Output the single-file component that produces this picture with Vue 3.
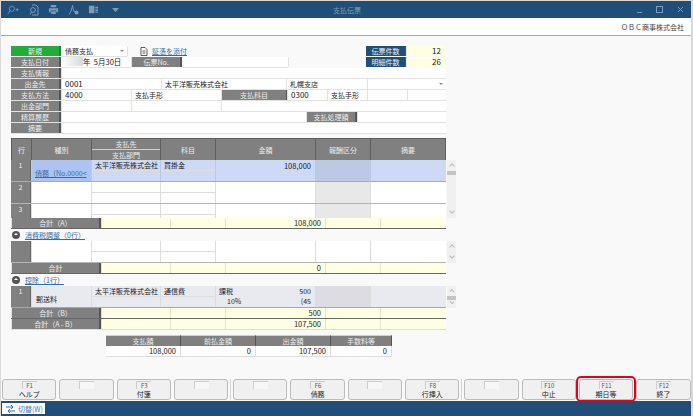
<template>
  <div class="window">
    <header class="titlebar">
      <div class="tools">
        <svg width="13" height="10" viewBox="0 0 16 12"><circle cx="6" cy="4.500" r="3.200" /><path d="M3.600 7 L1 11 M10.500 5.500h4M12.500 3.500v4" /></svg>
        <svg width="10" height="12" viewBox="0 0 10 12"><path d="M3 1h4l2 2v8H3" /><circle cx="4" cy="6" r="2.400" /><path d="M2.400 8 L1 10.500" /></svg>
        <svg width="11" height="11" viewBox="0 0 12 12"><path class="solid" d="M3 1h6v2.500H3zM1 4.500h10v4.500H9V7H3v2H1zM3.500 8h5v3h-5z" /></svg>
        <svg width="11" height="12" viewBox="0 0 11 12"><path d="M1 10.500C3 8 4 4 4.500 1.500C5 4 5.500 7 6.500 8" /><circle class="solid" cx="8.500" cy="8.500" r="2" /></svg>
        <svg width="11" height="11" viewBox="0 0 12 12"><path class="solid" d="M1 2h6v8H1zM8 3h3v2H8zM8 6h3v2H8z" /><path d="M8 9h3" /></svg>
        <svg class="drop" width="7" height="5" viewBox="0 0 7 5"><path class="solid" d="M0 1h7L3.500 5z" /></svg>
      </div>
      <span class="title">支払伝票</span>
      <div class="winbtns">
        <span class="minimize"></span>
        <span class="maximize"></span>
        <svg width="7" height="7" viewBox="0 0 7 7"><path d="M1 1l5 5M6 1L1 6" /></svg>
      </div>
    </header>

    <div class="companybar">ＯＢＣ商事株式会社</div>

    <main class="content">
      <section class="form">
        <div class="form-row first">
          <span class="label green">新規</span>
          <span class="cell combo w-65">債務支払<i class="caret"></i></span>
          <span class="attach">
            <svg width="8" height="9" viewBox="0 0 8 9"><path d="M1 .5h4l2 2v6H1zM2.500 4h3M2.500 6h3" /></svg>
            <a>証憑を添付</a>
          </span>
          <span class="counter">
            <span class="label navy">伝票件数</span><span class="count">12</span>
          </span>
        </div>
        <div class="form-row second">
          <span class="label">支払日付</span>
          <span class="cell date"><i class="masked"></i>年&nbsp;&nbsp;5月30日</span>
          <span class="label">伝票No.</span>
          <span class="cell w-105"></span>
          <span class="counter">
            <span class="label navy">明細件数</span><span class="count">26</span>
          </span>
        </div>
        <div class="form-row">
          <span class="label">支払情報</span>
          <span class="cell grow"></span>
        </div>
        <div class="form-row">
          <span class="label">出金先</span>
          <span class="cell num w-99">0001</span>
          <span class="cell w-125">太平洋販売株式会社</span>
          <span class="cell w-80">札幌支店</span>
          <span class="cell combo grow"><i class="caret"></i></span>
        </div>
        <div class="form-row">
          <span class="label">支払方法</span>
          <span class="cell num w-69">4000</span>
          <span class="cell w-90">支払手形</span>
          <span class="label w-65">支払科目</span>
          <span class="cell num w-40">0300</span>
          <span class="cell w-40">支払手形</span>
          <span class="cell w-40"></span>
          <span class="cell grow"></span>
        </div>
        <div class="form-row">
          <span class="label">出金部門</span>
          <span class="cell w-69"></span>
          <span class="cell w-90"></span>
          <span class="cell grow"></span>
        </div>
        <div class="form-row">
          <span class="label">精算履歴</span>
          <span class="cell w-245"></span>
          <span class="label">支払処理額</span>
          <span class="cell grow"></span>
        </div>
        <div class="form-row">
          <span class="label">摘要</span>
          <span class="cell grow"></span>
        </div>
      </section>

      <section class="grid-wrap">
        <div class="grid head">
          <div class="hd">行</div>
          <div class="hd">種別</div>
          <div class="hd split"><span>支払先</span><span>支払部門</span></div>
          <div class="hd">科目</div>
          <div class="hd">金額</div>
          <div class="hd">報酬区分</div>
          <div class="hd">摘要</div>
        </div>
        <div class="scroll-host">
          <div class="grid row sel">
            <div class="no">1</div>
            <div class="kind"><a>債務（No.0000&lt;</a></div>
            <div class="two"><span>太平洋販売株式会社</span><span></span></div>
            <div class="two"><span>買掛金</span><span></span></div>
            <div class="amt">108,000</div>
            <div class="shade"></div>
            <div></div>
          </div>
          <div class="grid row">
            <div class="no">2</div>
            <div></div>
            <div class="two"><span></span><span></span></div>
            <div class="two"><span></span><span></span></div>
            <div></div>
            <div class="shade"></div>
            <div></div>
          </div>
          <div class="grid row short">
            <div class="no">3</div>
            <div></div>
            <div class="two"><span></span><span></span></div>
            <div class="two"><span></span><span></span></div>
            <div></div>
            <div class="shade"></div>
            <div></div>
          </div>
          <div class="vscroll tall"><i class="up"></i><b></b><i class="down"></i></div>
        </div>
        <div class="grid total">
          <div class="sum-label">合計（A）</div>
          <div></div><div></div><div class="amt">108,000</div><div></div><div></div>
        </div>

        <div class="section-title">
          <i class="collapse"></i><a>消費税調整（0行）</a>
        </div>
        <div class="scroll-host">
          <div class="grid row">
            <div class="no"></div>
            <div></div>
            <div class="two"><span></span><span></span></div>
            <div class="two"><span></span><span></span></div>
            <div></div>
            <div></div>
            <div></div>
          </div>
          <div class="vscroll"><i class="up"></i><i class="down"></i></div>
        </div>
        <div class="grid total">
          <div class="sum-label">合計</div>
          <div></div><div></div><div class="amt">0</div><div></div><div></div>
        </div>

        <div class="section-title">
          <i class="collapse"></i><a>控除（1行）</a>
        </div>
        <div class="scroll-host">
          <div class="grid row deduct">
            <div class="no">1</div>
            <div class="kind plain">郵送料</div>
            <div class="two"><span>太平洋販売株式会社</span><span></span></div>
            <div class="two"><span>通信費</span><span></span></div>
            <div class="tax">
              <p><span>課税</span><span>500</span></p>
              <p><span class="rate">10%</span><span>(45</span></p>
            </div>
            <div class="shade"></div>
            <div></div>
          </div>
          <div class="vscroll"><i class="up"></i><b></b><i class="down"></i></div>
        </div>
        <div class="grid total">
          <div class="sum-label">合計（B）</div>
          <div></div><div></div><div class="amt">500</div><div></div><div></div>
        </div>
        <div class="grid total light">
          <div class="sum-label">合計（A - B）</div>
          <div></div><div></div><div class="amt">107,500</div><div></div><div></div>
        </div>
      </section>

      <section class="summary">
        <div v-for="s in summary" :key="s.label" class="sum-col">
          <div class="sum-head">{{ s.label }}</div>
          <div class="sum-value">{{ s.value }}</div>
        </div>
      </section>
    </main>

    <nav class="fkeys">
      <template v-for="(k, i) in fkeys" :key="i">
        <button class="fkey" :class="{ marked: k.marked, empty: !k.name }">
          <span class="keycap">{{ k.key }}</span>
          <span class="keyname">{{ k.name }}</span>
        </button>
        <span v-if="i === 3 || i === 7" class="keygap"></span>
      </template>
    </nav>

    <footer class="statusbar">
      <button class="switch">
        <svg width="9" height="8" viewBox="0 0 9 8"><path d="M0 2h7M5 0l2 2-2 2M9 6H2M4 4L2 6l2 2" /></svg>
        切替(W)
      </button>
    </footer>
  </div>
</template>

<script setup>
const summary = [
  { label: '支払額', value: '108,000' },
  { label: '前払金額', value: '0' },
  { label: '出金額', value: '107,500' },
  { label: '手数料等', value: '0' },
]

const fkeys = [
  { key: 'F1', name: 'ヘルプ' },
  { key: '', name: '' },
  { key: 'F3', name: '付箋' },
  { key: '', name: '' },
  { key: '', name: '' },
  { key: 'F6', name: '債務' },
  { key: '', name: '' },
  { key: 'F8', name: '行挿入' },
  { key: '', name: '' },
  { key: 'F10', name: '中止' },
  { key: 'F11', name: '期日等', marked: true },
  { key: 'F12', name: '終了' },
]
</script>

<style>
html, body { margin: 0; background: #d9d9d9; }
</style>

<style scoped>
.window {
  width: 690px;
  height: 415px;
  margin: 1px 2px 0 1px;
  display: flex;
  flex-direction: column;
  background: #f9f9f9;
  font-family: "Noto Sans CJK JP", "Liberation Sans", sans-serif;
  font-size: 7px;
  line-height: 10px;
  color: #222;
  overflow: hidden;
}

/* title bar */
.titlebar {
  height: 17px;
  flex: none;
  display: flex;
  align-items: center;
  position: relative;
  background: #1f4e79;
}
.tools { display: flex; align-items: center; gap: 9px; padding-left: 6px; }
.tools .drop { margin-left: 4px; }
.tools svg, .winbtns svg { fill: none; stroke: #7f9bb8; stroke-width: 1; }
.tools .solid { fill: #7f9bb8; stroke: none; }
.title {
  position: absolute;
  left: 332px;
  color: #7f9bb8;
  font-size: 7px;
}
.winbtns {
  margin-left: auto;
  display: flex;
  align-items: center;
  gap: 14px;
  padding-right: 7px;
}
.minimize { width: 5px; height: 1px; margin-top: 5px; background: #7f9bb8; }
.maximize { width: 5px; height: 5px; border: 1px solid #7f9bb8; }

.companybar {
  height: 17px;
  flex: none;
  box-sizing: border-box;
  text-align: right;
  padding: 4px 7px 0 0;
  background: #fff;
  color: #444;
  font-size: 7px;
}

.content {
  flex: 1;
  min-height: 0;
  border-top: 1px solid #a8a8a8;
  padding: 10px 0 0 10px;
}

/* header form */
.form { width: 435px; display: flex; flex-direction: column; gap: 1px; }
.form-row {
  height: 10px;
  display: flex;
  gap: 1px;
  background: #e2e2e2;
  box-shadow: 0 1px 0 #e2e2e2;
}
.form-row.first, .form-row.second { background: transparent; box-shadow: none; }
.form-row.first .cell, .form-row.second .cell { box-shadow: 0 1px 0 #e2e2e2, 1px 0 0 #e2e2e2; }
.label {
  flex: none;
  width: 48px;
  border-right: 2px solid #555;
  background: #808080;
  color: #eee;
  text-align: center;
  font-size: 7px;
  white-space: nowrap;
  overflow: hidden;
}
.label.green { background: #22ac38; border-right-color: #1a8a2c; }
.label.navy { width: 39px; border-right-width: 1px; background: #1f4e79; }
.label.w-65 { width: 64px; border-right-width: 1px; }
.cell {
  flex: none;
  box-sizing: border-box;
  padding-left: 3px;
  background: #fff;
  white-space: nowrap;
  overflow: hidden;
  position: relative;
}
.cell.num { font-size: 8px; }
.cell.grow { flex: 1; }
.w-40 { width: 39px; }
.w-65 { width: 65px; }
.w-69 { width: 69px; }
.w-80 { width: 80px; }
.w-90 { width: 89px; }
.w-99 { width: 99px; }
.w-105 { width: 105px; }
.w-125 { width: 124px; }
.w-245 { width: 244px; }
.caret {
  position: absolute;
  right: 3px;
  top: 4px;
  border: 2px solid transparent;
  border-top: 2px solid #888;
  border-bottom: 0;
}
.date { width: 69px; padding-left: 0; font-size: 7.500px; }
.masked {
  display: inline-block;
  width: 21px;
  height: 9px;
  vertical-align: top;
  background: linear-gradient(to right, #fff, #d8d8d8);
}
.attach {
  display: flex;
  align-items: center;
  gap: 4px;
  margin-left: 12px;
}
.attach svg { fill: #fff; stroke: #333; stroke-width: .8; }
a { color: #2f6ca8; text-decoration: underline; }
.counter { margin-left: auto; display: flex; }
.count {
  width: 40px;
  box-sizing: border-box;
  padding-right: 5px;
  text-align: right;
  background: #ffffe1;
  border-left: 1px solid #e5e5c8;
  font-size: 8px;
}

/* detail grid */
.grid-wrap { margin-top: 5px; width: 445px; }
.grid {
  display: grid;
  width: 435px;
  grid-template-columns: 20px 60px 69px 55px 100px 55px 76px;
}
.head { height: 22px; background: #d8d8d8; }
.hd {
  display: flex;
  align-items: center;
  justify-content: center;
  background: #808080;
  border-left: 1px solid #5e5e5e;
  border-top: 1px solid #5e5e5e;
  color: #eee;
  font-size: 7px;
}
.hd:last-child { border-right: 1px solid #5e5e5e; }
.hd.split { flex-direction: column; align-items: stretch; }
.hd.split span { flex: 1; text-align: center; line-height: 10px; }
.hd.split span + span { border-top: 1px solid #d0d0d0; }

.scroll-host { position: relative; width: 445px; }
.row {
  height: 22px;
  box-sizing: border-box;
  background: #fff;
  border-bottom: 1px solid #b5b5b5;
}
.row > div { border-left: 1px solid #ddd; min-width: 0; }
.row.short { height: 14px; border-bottom: 0; overflow: hidden; }
.row .no {
  border-left: 0;
  background: #808080;
  border-right: 1px solid #666;
  color: #eee;
  text-align: center;
  font-size: 7px;
  line-height: 10px;
}
.row .shade { background: #e8e8e8; }
.row.sel { background: #cdd9f5; border-bottom: 1px solid #9eacd0; }
.row.sel .kind { background: #aec3ef; }
.row.sel .shade { background: #bcc8e4; }
.row.sel > div { border-left-color: #bcc8e4; }
.row.deduct { background: #e9e9f0; border-bottom: 1px solid #a8a8a8; }
.row.deduct .shade { background: #dcdce2; }
.kind {
  display: flex;
  align-items: center;
  padding: 4px 0 0 3px;
  white-space: nowrap;
  overflow: hidden;
}
.kind.plain { padding-left: 4px; }
.two { display: flex; flex-direction: column; }
.two span {
  height: 10px;
  padding-left: 3px;
  white-space: nowrap;
  overflow: hidden;
}
.two span + span { border-top: 1px solid #ddd; }
.amt { text-align: right; padding-right: 4px; font-size: 7.500px; }
.row .amt { padding-top: 1px; }
.tax p {
  margin: 0;
  height: 10px;
  display: flex;
  justify-content: space-between;
  padding: 0 4px 0 3px;
}
.tax .rate { padding-left: 8px; }

.vscroll {
  position: absolute;
  top: 0;
  bottom: 0;
  right: 0;
  width: 9px;
  display: flex;
  flex-direction: column;
  align-items: center;
  background: #f0f0f0;
}
.vscroll b { width: 9px; height: 4px; margin-top: 3px; background: #c4c4c4; }
.vscroll i { width: 3px; height: 3px; border-left: 1px solid #bbb; border-top: 1px solid #bbb; }
.vscroll .up { margin-top: 4px; transform: rotate(45deg); }
.vscroll .down { margin-top: auto; margin-bottom: 5px; transform: rotate(225deg); }

.total {
  height: 11px;
  grid-template-columns: 90px 69px 55px 100px 55px 76px;
  background: #ffffe1;
  border-bottom: 1px solid #666;
  box-sizing: border-box;
}
.total.light { border-bottom: 1px solid #ddd; }
.total > div { border-left: 1px solid #e5e5c8; }
.sum-label {
  background: #808080;
  border-right: 2px solid #555;
  color: #eee;
  text-align: center;
  font-size: 7px;
  line-height: 10px;
}
.section-title {
  height: 12px;
  display: flex;
  align-items: center;
  gap: 5px;
  padding-left: 1px;
}
.collapse {
  width: 8px;
  height: 8px;
  border-radius: 50%;
  background: #555;
  position: relative;
}
.collapse::after {
  content: "";
  position: absolute;
  left: 2px;
  top: 2px;
  border: 2px solid transparent;
  border-bottom: 2px solid #fff;
  border-top: 0;
}

/* summary */
.summary {
  display: grid;
  grid-template-columns: 75px 75px 75px 61px;
  width: 286px;
  margin: 5px 0 0 95px;
}
.sum-head {
  height: 11px;
  background: #808080;
  border-right: 1px solid #555;
  border-top: 1px solid #d0d0d0;
  box-sizing: border-box;
  color: #eee;
  text-align: center;
  font-size: 7px;
  line-height: 10px;
}
.sum-value {
  height: 11px;
  box-sizing: border-box;
  padding-right: 4px;
  text-align: right;
  background: #fff;
  border-right: 1px solid #ddd;
  border-bottom: 1px solid #ddd;
  font-size: 7.500px;
}

/* function keys */
.fkeys {
  flex: none;
  height: 23px;
  padding: 1px 0 1px 1px;
  box-sizing: border-box;
  display: flex;
  gap: 3px;
}
.keygap { width: 1px; margin: 0 -1px; background: #d4d4d4; }
.fkey {
  position: relative;
  width: 54.300px;
  height: 21px;
  padding: 1px 0 0;
  display: flex;
  flex-direction: column;
  align-items: center;
  border: 1px solid #bbb;
  border-radius: 3px;
  background: #f0f0f0;
  font: inherit;
  color: #222;
}
.keycap {
  min-width: 12px;
  height: 7px;
  padding: 0 1px;
  border-top: 1px solid #ccc;
  border-left: 1px solid #ccc;
  font-size: 6px;
  line-height: 7px;
  color: #555;
}
.fkey.empty .keycap { width: 12px; background: #f7f7f7; }
.keyname { font-size: 7px; line-height: 11px; }
.marked::after {
  content: "";
  position: absolute;
  inset: -4px -3.500px -3px;
  border: 2.500px solid #e6001e;
  border-radius: 5px;
}

.statusbar {
  flex: none;
  height: 15px;
  display: flex;
  align-items: center;
  padding-left: 1px;
  background: #1f4e79;
}
.switch {
  width: 43px;
  height: 11px;
  padding: 0 0 0 4px;
  display: flex;
  align-items: center;
  gap: 3px;
  border: 0;
  background: #fff;
  color: #3a78c0;
  font: inherit;
  font-size: 7px;
}
.switch svg { fill: none; stroke: #2a72c8; stroke-width: 1; }
</style>
